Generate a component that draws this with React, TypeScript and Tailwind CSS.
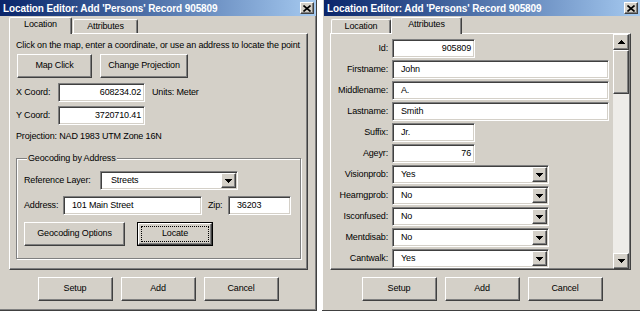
import React from "react";

const raised =
  "bg-[#d4d0c8] border border-t-white border-l-white border-r-[#404040] border-b-[#404040] shadow-[inset_-1px_-1px_0_#808080]";
const sunken =
  "bg-white border border-t-[#808080] border-l-[#808080] border-r-white border-b-white shadow-[inset_1px_1px_0_#404040,inset_-1px_-1px_0_#d4d0c8]";

function DownArrow() {
  return (
    <svg width="7" height="4" viewBox="0 0 7 4" shapeRendering="crispEdges">
      <path d="M0 0h7v1h-1v1h-1v1h-1v1h-1v-1h-1v-1h-1v-1h-1z" fill="#000" />
    </svg>
  );
}

function UpArrow() {
  return (
    <svg width="7" height="4" viewBox="0 0 7 4" shapeRendering="crispEdges">
      <path d="M3 0h1v1h1v1h1v1h1v1h-7v-1h1v-1h1v-1h1z" fill="#000" />
    </svg>
  );
}

function TitleBar() {
  return (
    <div className="h-[16px] bg-linear-to-r from-[#0a246a] to-[#a6caf0] flex items-center justify-between pl-[3px] pr-[2px]">
      <span className="text-white font-bold text-[10px] tracking-[-0.1px] whitespace-nowrap">
        Location Editor: Add 'Persons' Record 905809
      </span>
      <div className={`w-[14px] h-[12px] ${raised} flex items-center justify-center`}>
        <svg width="8" height="7" viewBox="0 0 8 7">
          <path d="M0.5 0.5L7.5 6.5M7.5 0.5L0.5 6.5" stroke="#000" strokeWidth="1.6" />
        </svg>
      </div>
    </div>
  );
}

function Tab({ label, active, w }: { label: string; active?: boolean; w: string }) {
  return active ? (
    <div
      className={`${w} h-[17px] -mb-[1px] relative z-10 bg-[#d4d0c8] border-t border-l border-r border-t-white border-l-white border-r-[#404040] rounded-t-[2px] shadow-[inset_-1px_0_0_#808080] flex items-center justify-center pb-[2px]`}
    >
      {label}
    </div>
  ) : (
    <div
      className={`${w} h-[14px] bg-[#d4d0c8] border-t border-l border-r border-t-white border-l-white border-r-[#404040] rounded-t-[2px] shadow-[inset_-1px_0_0_#808080] flex items-center justify-center`}
    >
      {label}
    </div>
  );
}

function Button({ label, w, isDefault }: { label: string; w: string; isDefault?: boolean }) {
  if (isDefault) {
    return (
      <div className={`${w} h-[24px] border border-black flex`}>
        <div className={`flex-1 ${raised} p-[2px] flex`}>
          <div className="flex-1 border border-dotted border-black flex items-center justify-center">
            {label}
          </div>
        </div>
      </div>
    );
  }
  return <div className={`${w} h-[24px] ${raised} flex items-center justify-center`}>{label}</div>;
}

function Field({ value, w, right }: { value: string; w: string; right?: boolean }) {
  return (
    <div
      className={`${w} h-[19px] ${sunken} flex items-center ${right ? "justify-end pr-[3px]" : "pl-[8px]"}`}
    >
      {value}
    </div>
  );
}

function Select({ value, w, pl }: { value: string; w: string; pl: string }) {
  return (
    <div className={`${w} h-[19px] ${sunken} flex items-center ${pl} pr-[1px]`}>
      <span className="flex-1">{value}</span>
      <div className={`w-[15px] h-[15px] ${raised} flex items-center justify-center`}>
        <DownArrow />
      </div>
    </div>
  );
}

function BottomButtons() {
  return (
    <div className="flex justify-center gap-[8px] mt-[7px]">
      <Button label="Setup" w="w-[75px]" />
      <Button label="Add" w="w-[75px]" />
      <Button label="Cancel" w="w-[75px]" />
    </div>
  );
}

function LocationPanel() {
  return (
    <div className="h-[237px] border border-t-white border-l-white border-r-[#404040] border-b-[#404040] shadow-[inset_-1px_-1px_0_#808080] flex flex-col">
      <div className="mt-[6px] pl-[6px] h-[11px] leading-[11px] whitespace-nowrap">
        Click on the map, enter a coordinate, or use an address to locate the point
      </div>
      <div className="mt-[3px] pl-[7px] flex gap-[8px]">
        <Button label="Map Click" w="w-[75px]" />
        <Button label="Change Projection" w="w-[88px]" />
      </div>
      <div className="mt-[5px] pl-[6px] flex items-center">
        <span className="w-[42px]">X Coord:</span>
        <Field value="608234.02" w="w-[87px]" right />
        <span className="ml-[7px]">Units: Meter</span>
      </div>
      <div className="mt-[4px] pl-[6px] flex items-center">
        <span className="w-[42px]">Y Coord:</span>
        <Field value="3720710.41" w="w-[87px]" right />
      </div>
      <div className="mt-[6px] pl-[6px] h-[11px] leading-[11px]">Projection: NAD 1983 UTM Zone 16N</div>
      <div className="relative mt-[16px] ml-[6px] w-[285px] h-[101px] border border-[#808080] shadow-[inset_1px_1px_0_white,1px_1px_0_white] flex flex-col pl-[7px]">
        <span className="absolute -top-[7px] left-[10px] px-[1px] bg-[#d4d0c8] leading-[12px]">
          Geocoding by Address
        </span>
        <div className="mt-[12px] flex items-center">
          <span className="w-[76px]">Reference Layer:</span>
          <Select value="Streets" w="w-[138px]" pl="pl-[10px]" />
        </div>
        <div className="mt-[6px] flex items-center">
          <span className="w-[39px]">Address:</span>
          <Field value="101 Main Street" w="w-[139px]" />
          <span className="ml-[6px] w-[20px]">Zip:</span>
          <Field value="36203" w="w-[63px]" />
        </div>
        <div className="mt-[7px] flex items-center gap-[12px]">
          <Button label="Geocoding Options" w="w-[101px]" />
          <Button label="Locate" w="w-[76px]" isDefault />
        </div>
      </div>
    </div>
  );
}

const rows: { label: string; kind: "field" | "select"; value: string; w: string; right?: boolean }[] = [
  { label: "Id:", kind: "field", value: "905809", w: "w-[83px]", right: true },
  { label: "Firstname:", kind: "field", value: "John", w: "w-[217px]" },
  { label: "Middlename:", kind: "field", value: "A.", w: "w-[217px]" },
  { label: "Lastname:", kind: "field", value: "Smith", w: "w-[217px]" },
  { label: "Suffix:", kind: "field", value: "Jr.", w: "w-[83px]" },
  { label: "Ageyr:", kind: "field", value: "76", w: "w-[83px]", right: true },
  { label: "Visionprob:", kind: "select", value: "Yes", w: "w-[157px]" },
  { label: "Hearngprob:", kind: "select", value: "No", w: "w-[157px]" },
  { label: "Isconfused:", kind: "select", value: "No", w: "w-[157px]" },
  { label: "Mentdisab:", kind: "select", value: "No", w: "w-[157px]" },
  { label: "Cantwalk:", kind: "select", value: "Yes", w: "w-[157px]" },
];

function AttributesPanel() {
  return (
    <div className="h-[237px] border border-t-white border-l-white border-r-[#404040] border-b-[#404040] shadow-[inset_-1px_-1px_0_#808080] flex">
      <div className="flex-1 overflow-hidden pt-[5px] flex flex-col gap-[2px]">
        {rows.map((r) => (
          <div key={r.label} className="flex items-center shrink-0">
            <span className="w-[57px] text-right">{r.label}</span>
            <div className="ml-[4px]">
              {r.kind === "field" ? (
                <Field value={r.value} w={r.w} right={r.right} />
              ) : (
                <Select value={r.value} w={r.w} pl="pl-[8px]" />
              )}
            </div>
          </div>
        ))}
      </div>
      <div className="w-[16px] mr-[1px] flex flex-col bg-[#eeece8]">
        <div className={`h-[16px] ${raised} flex items-center justify-center`}>
          <UpArrow />
        </div>
        <div className={`h-[44px] ${raised}`} />
        <div className="flex-1" />
        <div className={`h-[16px] ${raised} flex items-center justify-center`}>
          <DownArrow />
        </div>
      </div>
    </div>
  );
}

export default function App() {
  return (
    <div className="w-[640px] h-[311px] bg-white flex justify-between overflow-hidden font-['Liberation_Sans',Arial,sans-serif] text-[9px] tracking-[-0.15px] text-black">
      <div className="w-[317px] h-[311px] bg-[#d4d0c8] flex flex-col border-r border-r-[#404040] border-b border-b-[#404040] shadow-[inset_-1px_-1px_0_#808080]">
        <TitleBar />
        <div className="mt-[1px] pl-[9px] pr-[8px]">
          <div className="h-[16px] flex items-end">
            <Tab label="Location" active w="w-[63px]" />
            <div className="ml-[1px]">
              <Tab label="Attributes" w="w-[65px]" />
            </div>
          </div>
          <LocationPanel />
        </div>
        <BottomButtons />
      </div>
      <div className="w-[318px] h-[311px] bg-[#d4d0c8] flex flex-col pl-[2px] border-b border-b-[#404040] shadow-[inset_1px_0_0_white]">
        <TitleBar />
        <div className="mt-[1px] pl-[6px] pr-[9px]">
          <div className="h-[16px] flex items-end pl-[1px]">
            <Tab label="Location" w="w-[60px]" />
            <Tab label="Attributes" active w="w-[71px]" />
          </div>
          <AttributesPanel />
        </div>
        <BottomButtons />
      </div>
    </div>
  );
}
